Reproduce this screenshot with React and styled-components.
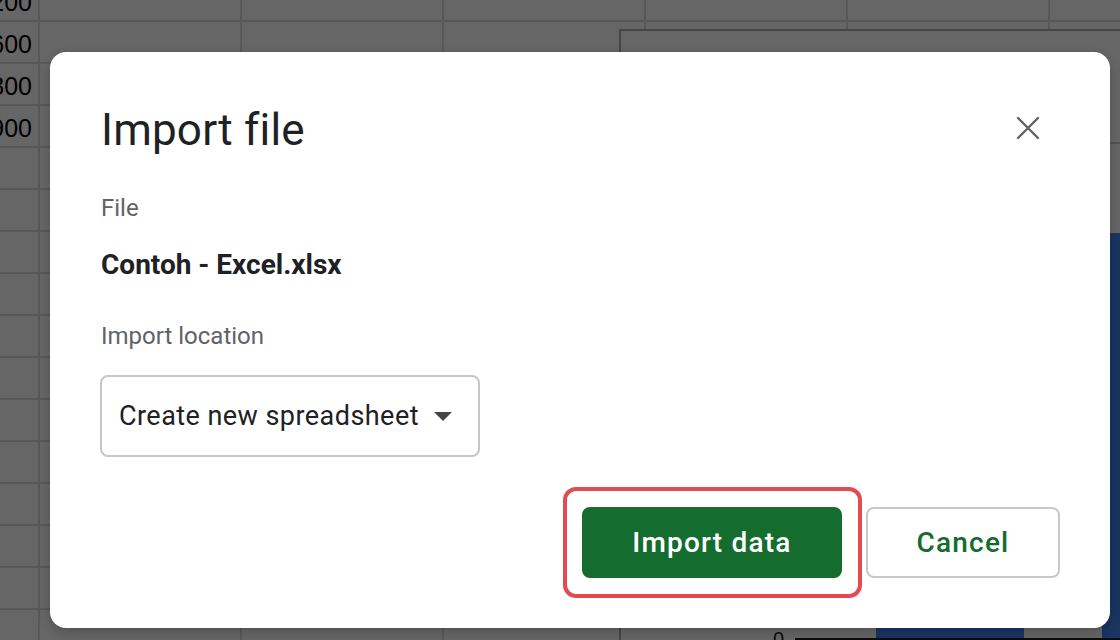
import React from "react";
import styled, { createGlobalStyle } from "styled-components";

const GlobalStyle = createGlobalStyle`
  html, body { margin: 0; padding: 0; }
  body {
    width: 1120px;
    height: 640px;
    overflow: hidden;
    font-family: Roboto, "Noto Sans", Arial, sans-serif;
  }
`;

const Page = styled.div`
  position: relative;
  width: 1120px;
  height: 640px;
  overflow: hidden;
  background: #ffffff;
`;

const Sheet = styled.div`
  display: grid;
  grid-template-columns: 40px repeat(6, 202px);
  grid-auto-rows: 42px;
  margin-top: -20px;
`;

const Cell = styled.div`
  box-sizing: border-box;
  border-right: 2px solid #dcdcdc;
  border-bottom: 2px solid #dcdcdc;
  display: flex;
  align-items: flex-end;
  justify-content: flex-end;
  padding: 0 6px 4px 0;
  overflow: hidden;
  white-space: nowrap;
  font-family: "Liberation Sans", Arial, sans-serif;
  font-size: 25px;
  line-height: 28px;
  color: #000;
`;

const Chart = styled.div`
  position: absolute;
  left: 619px;
  top: 29px;
  width: 540px;
  height: 660px;
  box-sizing: border-box;
  border: 2px solid #b0b0b0;
  background: #ffffff;
`;

const Scrim = styled.div`
  position: absolute;
  inset: 0;
  background: rgba(0, 0, 0, 0.6);
`;

const Dialog = styled.div`
  position: absolute;
  left: 50px;
  top: 52px;
  width: 1060px;
  height: 576px;
  box-sizing: border-box;
  padding: 52px 50px 50px 50px;
  background: #ffffff;
  border-radius: 16px;
  box-shadow: 0 4px 12px rgba(0, 0, 0, 0.2);
  display: flex;
  flex-direction: column;
`;

const Header = styled.div`
  display: flex;
  justify-content: space-between;
  align-items: center;
  height: 52px;
  padding-left: 1px;
`;

const Title = styled.h2`
  margin: 0;
  font-family: Roboto, "Noto Sans", sans-serif;
  font-weight: 400;
  font-size: 44px;
  line-height: 52px;
  letter-spacing: 0.2px;
  color: #202124;
`;

const CloseButton = styled.button`
  width: 64px;
  height: 64px;
  margin-top: -4px;
  border: none;
  background: transparent;
  padding: 0;
  display: grid;
  place-items: center;
  cursor: pointer;
`;

const Label = styled.div`
  margin-top: ${(p) => p.$gap}px;
  padding-left: 1px;
  font-size: 24px;
  line-height: 32px;
  color: #5f6368;
`;

const FileName = styled.div`
  margin-top: 23px;
  padding-left: 1px;
  font-weight: 700;
  font-size: 28px;
  line-height: 36px;
  color: #202124;
`;

const Select = styled.div`
  margin-top: 23px;
  align-self: flex-start;
  width: 380px;
  height: 82px;
  box-sizing: border-box;
  border: 2px solid #c7c7c7;
  border-radius: 8px;
  padding: 0 0 0 17px;
  display: flex;
  align-items: center;
  gap: 15px;
  font-size: 27px;
  line-height: 32px;
  letter-spacing: 0.45px;
  color: #202124;
`;

const Footer = styled.div`
  margin-top: auto;
  display: flex;
  justify-content: flex-end;
  align-items: center;
  gap: 24px;
`;

const Highlight = styled.span`
  position: relative;
  display: inline-flex;
  &::after {
    content: "";
    position: absolute;
    top: -20px;
    bottom: -20px;
    left: -19px;
    right: -20px;
    border: 4.5px solid #e34b51;
    border-radius: 13px;
    pointer-events: none;
  }
`;

const Button = styled.button`
  width: ${(p) => p.$width}px;
  height: 71px;
  box-sizing: border-box;
  border-radius: 8px;
  padding: 0;
  font-family: Roboto, "Noto Sans", sans-serif;
  font-weight: 500;
  font-size: 28px;
  letter-spacing: 1.2px;
  cursor: pointer;
  border: ${(p) => (p.$primary ? "none" : "2px solid #c8c8c8")};
  background: ${(p) => (p.$primary ? "#146c2e" : "#ffffff")};
  color: ${(p) => (p.$primary ? "#ffffff" : "#146c2e")};
`;

const colA = ["1200", "1600", "1800", "1900"];

export default function App() {
  const rows = Array.from({ length: 16 }, (_, r) => r);
  return (
    <Page>
      <GlobalStyle />
      <Sheet>
        {rows.map((r) =>
          Array.from({ length: 7 }, (_, c) => (
            <Cell key={`${r}-${c}`}>{c === 0 ? colA[r] || "" : ""}</Cell>
          ))
        )}
      </Sheet>
      <Chart>
        <svg width="540" height="660" viewBox="0 0 540 660">
          <line x1="0" y1="112" x2="540" y2="112" stroke="#d0d0d0" strokeWidth="2" />
          <rect x="255" y="260" width="148" height="349" fill="#4285f4" />
          <rect x="481" y="202" width="80" height="407" fill="#4285f4" />
          <line x1="174" y1="608" x2="540" y2="608" stroke="#222" strokeWidth="2" />
          <text
            x="163"
            y="615"
            textAnchor="end"
            fontFamily="Liberation Sans, Arial, sans-serif"
            fontSize="20"
            fill="#222"
          >
            0
          </text>
        </svg>
      </Chart>
      <Scrim />
      <Dialog role="dialog" aria-label="Import file">
        <Header>
          <Title>Import file</Title>
          <CloseButton aria-label="Close">
            <svg width="24" height="24" viewBox="0 0 24 24">
              <path
                d="M2 2 L22 22 M22 2 L2 22"
                stroke="#5f6368"
                strokeWidth="2.4"
                strokeLinecap="round"
              />
            </svg>
          </CloseButton>
        </Header>
        <Label $gap={36}>File</Label>
        <FileName>Contoh - Excel.xlsx</FileName>
        <Label $gap={37}>Import location</Label>
        <Select>
          <span>Create new spreadsheet</span>
          <svg width="18" height="9" viewBox="0 0 18 9">
            <polygon points="0,0 18,0 9,9" fill="#444746" />
          </svg>
        </Select>
        <Footer>
          <Highlight>
            <Button $primary $width={260}>Import data</Button>
          </Highlight>
          <Button $width={194}>Cancel</Button>
        </Footer>
      </Dialog>
    </Page>
  );
}
